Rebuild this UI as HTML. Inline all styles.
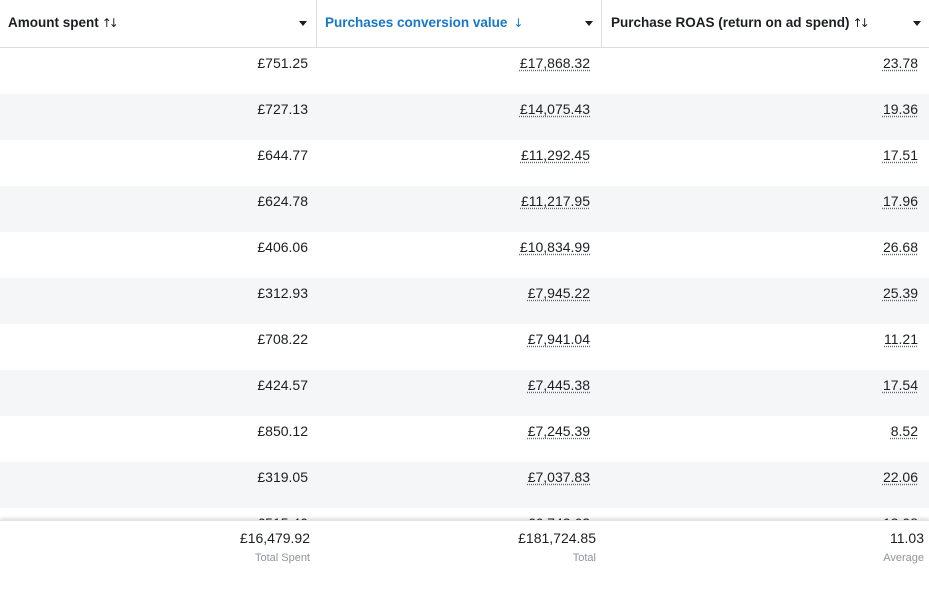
<!DOCTYPE html>
<html><head><meta charset="utf-8"><style>
*{margin:0;padding:0;box-sizing:border-box}
body{width:929px;height:591px;overflow:hidden;background:#fff;font-family:"Liberation Sans",sans-serif;color:#1c1e21;position:relative}
.hdr{position:absolute;top:0;left:0;width:929px;height:48px;border-bottom:1px solid #dadde1;background:#fff}
.hc{position:absolute;top:0;height:47px;font-weight:bold;font-size:13.5px;line-height:46px;padding-left:8px;white-space:nowrap}
.hc .s{font-weight:normal;font-family:"DejaVu Sans",sans-serif;font-size:12px;letter-spacing:-3px;margin-left:3px}
.hc .ar{position:absolute;top:21px;width:0;height:0;border-left:4px solid transparent;border-right:4px solid transparent;border-top:5px solid #1c1e21}
.sep{position:absolute;top:0;height:47px;width:1px;background:#dadde1}
.rows{position:absolute;top:48px;left:0;width:929px;height:472px;overflow:hidden}
.r{height:46px;position:relative;font-size:14px}
.r:nth-child(even){background:#f5f6f7}
.r span{position:absolute;top:7px}
.u{text-decoration:underline dotted #606770;text-underline-offset:2px}
.ft{position:absolute;top:520px;left:0;width:929px;height:71px;background:#fff;box-shadow:0 -2px 3px rgba(0,0,0,.12);border-top:1px solid #e4e6eb}
.ft span{position:absolute}
.v{top:9px;font-size:14px}
.l{top:31px;font-size:11px;color:#90949c}
</style></head><body>
<div class="rows">
<div class="r"><span style="right:621px">£751.25</span><span class="u" style="right:339px">£17,868.32</span><span class="u" style="right:11px">23.78</span></div>
<div class="r"><span style="right:621px">£727.13</span><span class="u" style="right:339px">£14,075.43</span><span class="u" style="right:11px">19.36</span></div>
<div class="r"><span style="right:621px">£644.77</span><span class="u" style="right:339px">£11,292.45</span><span class="u" style="right:11px">17.51</span></div>
<div class="r"><span style="right:621px">£624.78</span><span class="u" style="right:339px">£11,217.95</span><span class="u" style="right:11px">17.96</span></div>
<div class="r"><span style="right:621px">£406.06</span><span class="u" style="right:339px">£10,834.99</span><span class="u" style="right:11px">26.68</span></div>
<div class="r"><span style="right:621px">£312.93</span><span class="u" style="right:339px">£7,945.22</span><span class="u" style="right:11px">25.39</span></div>
<div class="r"><span style="right:621px">£708.22</span><span class="u" style="right:339px">£7,941.04</span><span class="u" style="right:11px">11.21</span></div>
<div class="r"><span style="right:621px">£424.57</span><span class="u" style="right:339px">£7,445.38</span><span class="u" style="right:11px">17.54</span></div>
<div class="r"><span style="right:621px">£850.12</span><span class="u" style="right:339px">£7,245.39</span><span class="u" style="right:11px">8.52</span></div>
<div class="r"><span style="right:621px">£319.05</span><span class="u" style="right:339px">£7,037.83</span><span class="u" style="right:11px">22.06</span></div>
<div class="r"><span style="right:621px">£515.40</span><span class="u" style="right:339px">£6,742.62</span><span class="u" style="right:11px">13.08</span></div>
</div>
<div class="hdr">
<div class="hc" style="left:0;width:316px">Amount spent<span class="s">↑↓</span><span class="ar" style="left:299px"></span></div>
<div class="sep" style="left:316px"></div>
<div class="hc" style="left:317px;width:284px;color:#1877c9">Purchases conversion value<span class="s" style="margin-left:6px">↓</span><span class="ar" style="left:268px"></span></div>
<div class="sep" style="left:601px"></div>
<div class="hc" style="left:603px;width:326px">Purchase ROAS (return on ad spend)<span class="s">↑↓</span><span class="ar" style="left:310px"></span></div>
</div>
<div class="ft">
<span class="v" style="right:619px">£16,479.92</span><span class="l" style="right:619px">Total Spent</span>
<span class="v" style="right:333px">£181,724.85</span><span class="l" style="right:333px">Total</span>
<span class="v" style="right:5px">11.03</span><span class="l" style="right:5px">Average</span>
</div>
</body></html>
